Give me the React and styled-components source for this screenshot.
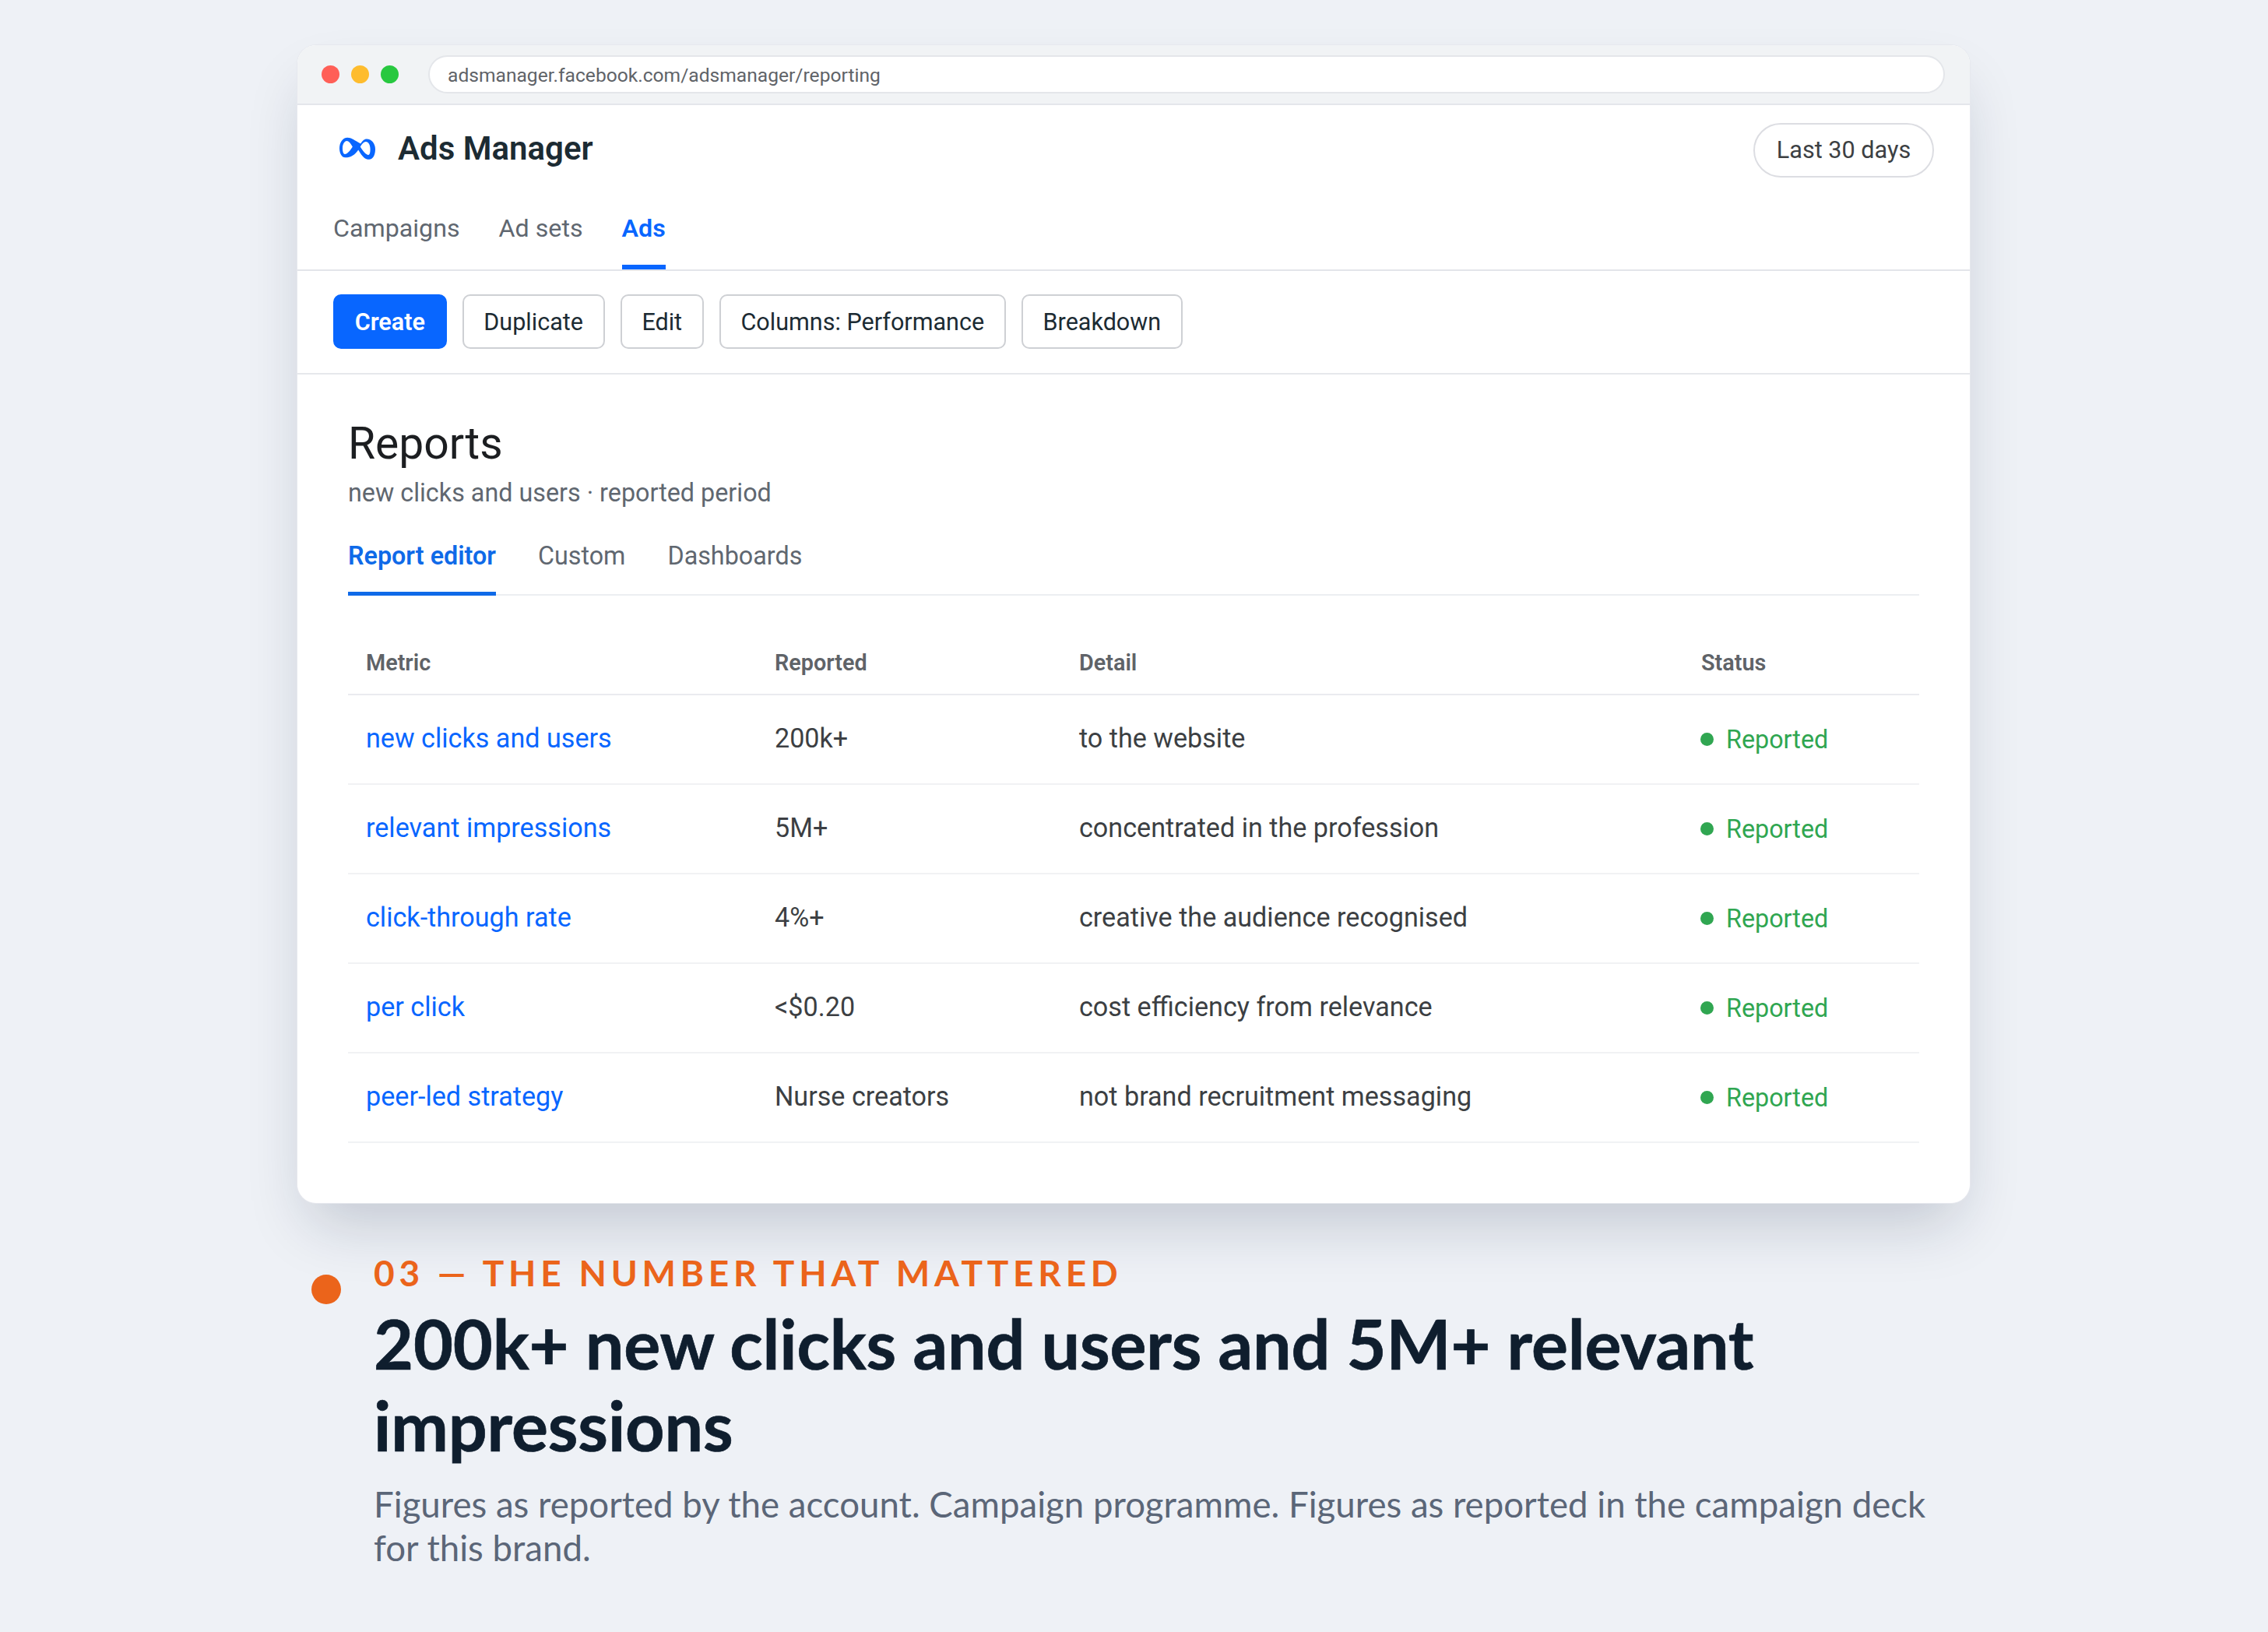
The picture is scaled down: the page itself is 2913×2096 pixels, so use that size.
import React from "react";
import styled, { createGlobalStyle } from "styled-components";

const GlobalStyle = createGlobalStyle`
  * { box-sizing: border-box; }
  html, body { margin: 0; padding: 0; background: #eef1f6; }
`;

const Page = styled.div`
  width: 2913px;
  height: 2096px;
  padding: 58px 383px 0 382px;
  background: #eef1f6;
  overflow: hidden;
`;

const Card = styled.div`
  height: 1487px;
  background: #fff;
  border-radius: 24px;
  overflow: hidden;
  font-family: Roboto, sans-serif;
`;

const CardShadow = styled.div`
  border-radius: 24px;
  box-shadow: 0 0 0 1px #e6e8ee, 0 40px 80px -16px rgba(15, 30, 60, 0.2);
`;

const TitleBar = styled.div`
  height: 77px;
  display: flex;
  align-items: center;
  padding: 0 32px 0 31px;
  background: #f1f3f5;
  border-bottom: 2px solid #e4e6eb;
`;

const Dots = styled.div`
  display: flex;
  gap: 15px;
  margin-right: 38px;
`;

const Dot = styled.span`
  width: 23px;
  height: 23px;
  border-radius: 50%;
  background: ${(p) => p.$color};
`;

const UrlBar = styled.div`
  flex: 1;
  height: 49px;
  padding: 2px 23px 0;
  display: flex;
  align-items: center;
  background: #fff;
  border: 2px solid #e4e6ea;
  border-radius: 25px;
  font-size: 24.6px;
  color: #5f6368;
`;

const Header = styled.div`
  padding: 23px 46px 0;
  border-bottom: 2px solid #e3e5ea;
`;

const HeaderTop = styled.div`
  height: 70px;
  display: flex;
  align-items: flex-start;
  justify-content: space-between;
`;

const Brand = styled.div`
  display: flex;
  align-items: center;
  gap: 29px;
  margin: -3px 0 0 8px;
  height: 70px;
`;

const BrandName = styled.div`
  font-size: 42px;
  font-weight: 600;
  color: #1c2b33;
`;

const RangePill = styled.div`
  height: 70px;
  width: 232px;
  padding-bottom: 2px;
  display: flex;
  align-items: center;
  justify-content: center;
  border: 2px solid #dcdde2;
  border-radius: 35px;
  font-size: 30.6px;
  color: #3c4043;
`;

const Nav = styled.div`
  display: flex;
  gap: 50px;
  margin-top: 42px;
`;

const NavItem = styled.div`
  height: 76px;
  padding-top: 4px;
  font-size: 32.2px;
  font-weight: ${(p) => (p.$active ? 600 : 400)};
  color: ${(p) => (p.$active ? "#0866ff" : "#606770")};
  border-bottom: 6px solid ${(p) => (p.$active ? "#0866ff" : "transparent")};
`;

const Toolbar = styled.div`
  display: flex;
  gap: 20px;
  padding: 30px 46px 31px;
  border-bottom: 2px solid #e6e8ec;
`;

const Button = styled.div`
  height: 70px;
  padding: 0 25.7px;
  display: flex;
  align-items: center;
  border-radius: 10px;
  font-size: 30.55px;
  font-weight: ${(p) => (p.$primary ? 600 : 400)};
  color: ${(p) => (p.$primary ? "#fff" : "#1c2b33")};
  background: ${(p) => (p.$primary ? "#0866ff" : "#fff")};
  border: 2px solid ${(p) => (p.$primary ? "#0866ff" : "#ced0d4")};
`;

const Content = styled.div`
  padding: 53px 65px 0;
`;

const Title = styled.h1`
  margin: 0;
  font-size: 57px;
  line-height: 72px;
  font-weight: 400;
  color: #1c1e21;
`;

const Subtitle = styled.div`
  margin-top: 5px;
  font-size: 32.3px;
  line-height: 44px;
  color: #606770;
`;

const Tabs = styled.div`
  display: flex;
  gap: 54px;
  margin-top: 34px;
  border-bottom: 2px solid #eceef1;
`;

const Tab = styled.div`
  height: 76px;
  padding-top: 6px;
  font-size: 32.3px;
  font-weight: ${(p) => (p.$active ? 600 : 400)};
  color: ${(p) => (p.$active ? "#0f6ae8" : "#606770")};
  border-bottom: 5px solid ${(p) => (p.$active ? "#0f6ae8" : "transparent")};
  margin-bottom: -2px;
`;

const Table = styled.table`
  width: 100%;
  margin-top: 46px;
  table-layout: fixed;
  border-collapse: collapse;
`;

const HeadCell = styled.th`
  width: ${(p) => p.$width}px;
  height: 81px;
  padding: 0 23px;
  text-align: left;
  font-size: 28.8px;
  font-weight: 600;
  color: #5f6368;
  border-bottom: 2px solid #eaebef;
`;

const Row = styled.tr`
  height: 115px;
  border-bottom: 2px solid #f1f2f4;
`;

const Cell = styled.td`
  padding: 0 23px ${(p) => (p.$status ? 0 : 4)}px;
  font-size: 34.15px;
  color: ${(p) => (p.$link ? "#0866ff" : "#3c3f43")};
`;

const Status = styled.div`
  display: flex;
  align-items: center;
  gap: 16px;
  margin-left: -1px;
  font-size: 32.3px;
  color: #30a651;
`;

const StatusDot = styled.span`
  width: 17px;
  height: 17px;
  border-radius: 50%;
  background: #30a651;
`;

const Caption = styled.div`
  display: flex;
  margin-top: 62px;
  font-family: Lato, sans-serif;
`;

const CaptionDot = styled.span`
  flex: none;
  width: 38px;
  height: 38px;
  margin: 30px 42px 0 18px;
  border-radius: 50%;
  background: #eb641b;
`;

const CaptionBody = styled.div`
  flex: 1;
`;

const Eyebrow = styled.div`
  font-size: 46px;
  line-height: 56px;
  font-weight: 700;
  letter-spacing: 5.75px;
  color: #eb641b;
`;

const Headline = styled.h2`
  margin: 10px 0 0;
  font-size: 88px;
  line-height: 105px;
  font-weight: 700;
  letter-spacing: -0.15px;
  -webkit-text-stroke: 0.7px #0f1e2e;
  color: #0f1e2e;
`;

const Note = styled.p`
  margin: 21px 0 0;
  font-size: 45.6px;
  line-height: 56px;
  color: #5b6678;
`;

const rows = [
  ["new clicks and users", "200k+", "to the website"],
  ["relevant impressions", "5M+", "concentrated in the profession"],
  ["click-through rate", "4%+", "creative the audience recognised"],
  ["per click", "<$0.20", "cost efficiency from relevance"],
  ["peer-led strategy", "Nurse creators", "not brand recruitment messaging"],
];

function MetaLogo() {
  return (
    <svg width="46" height="29" viewBox="0 0 46.500 29">
      <path
        fill="#0866ff"
        fillRule="evenodd"
        d="M0 14.500C0 7 4 0.500 10.500 0.500C15 0.500 20 4 27.500 8.500C29.500 5 32 2.300 35.500 2.300C41.500 2.300 46.500 8 46.500 15.500C46.500 23 43.500 29 38.500 29C33.500 29 30 26 24.500 16.500C20 23 15 26.500 7.500 26.500C3 26.500 0 21 0 14.500ZM9.500 5C6.500 5 4 9.500 4 14.500C4 19 5.300 22 7 22C10 22 14 17.500 17 12.500C14.500 8 12 5 9.500 5ZM34.300 6C31.500 6 29.500 8.500 27 12.500C31 18.500 34.500 23 37.500 23C39.500 23 40 19.500 40 15.500C40 10 37.500 6 34.300 6Z"
      />
    </svg>
  );
}

export default function App() {
  return (
    <Page>
      <GlobalStyle />
      <CardShadow>
        <Card>
          <TitleBar>
            <Dots>
              <Dot $color="#ff5f57" />
              <Dot $color="#febc2e" />
              <Dot $color="#28c840" />
            </Dots>
            <UrlBar>adsmanager.facebook.com/adsmanager/reporting</UrlBar>
          </TitleBar>
          <Header>
            <HeaderTop>
              <Brand>
                <MetaLogo />
                <BrandName>Ads Manager</BrandName>
              </Brand>
              <RangePill>Last 30 days</RangePill>
            </HeaderTop>
            <Nav>
              <NavItem>Campaigns</NavItem>
              <NavItem>Ad sets</NavItem>
              <NavItem $active>Ads</NavItem>
            </Nav>
          </Header>
          <Toolbar>
            <Button $primary>Create</Button>
            <Button>Duplicate</Button>
            <Button>Edit</Button>
            <Button>Columns: Performance</Button>
            <Button>Breakdown</Button>
          </Toolbar>
          <Content>
            <Title>Reports</Title>
            <Subtitle>new clicks and users · reported period</Subtitle>
            <Tabs>
              <Tab $active>Report editor</Tab>
              <Tab>Custom</Tab>
              <Tab>Dashboards</Tab>
            </Tabs>
            <Table>
              <thead>
                <tr>
                  <HeadCell $width={525}>Metric</HeadCell>
                  <HeadCell $width={391}>Reported</HeadCell>
                  <HeadCell $width={799}>Detail</HeadCell>
                  <HeadCell $width={303}>Status</HeadCell>
                </tr>
              </thead>
              <tbody>
                {rows.map((row) => (
                  <Row key={row[0]}>
                    <Cell $link>{row[0]}</Cell>
                    <Cell>{row[1]}</Cell>
                    <Cell>{row[2]}</Cell>
                    <Cell $status>
                      <Status>
                        <StatusDot />
                        Reported
                      </Status>
                    </Cell>
                  </Row>
                ))}
              </tbody>
            </Table>
          </Content>
        </Card>
      </CardShadow>
      <Caption>
        <CaptionDot />
        <CaptionBody>
          <Eyebrow>03 — THE NUMBER THAT MATTERED</Eyebrow>
          <Headline>200k+ new clicks and users and 5M+ relevant impressions</Headline>
          <Note>
            Figures as reported by the account. Campaign programme. Figures as reported in the campaign deck for this brand.
          </Note>
        </CaptionBody>
      </Caption>
    </Page>
  );
}
